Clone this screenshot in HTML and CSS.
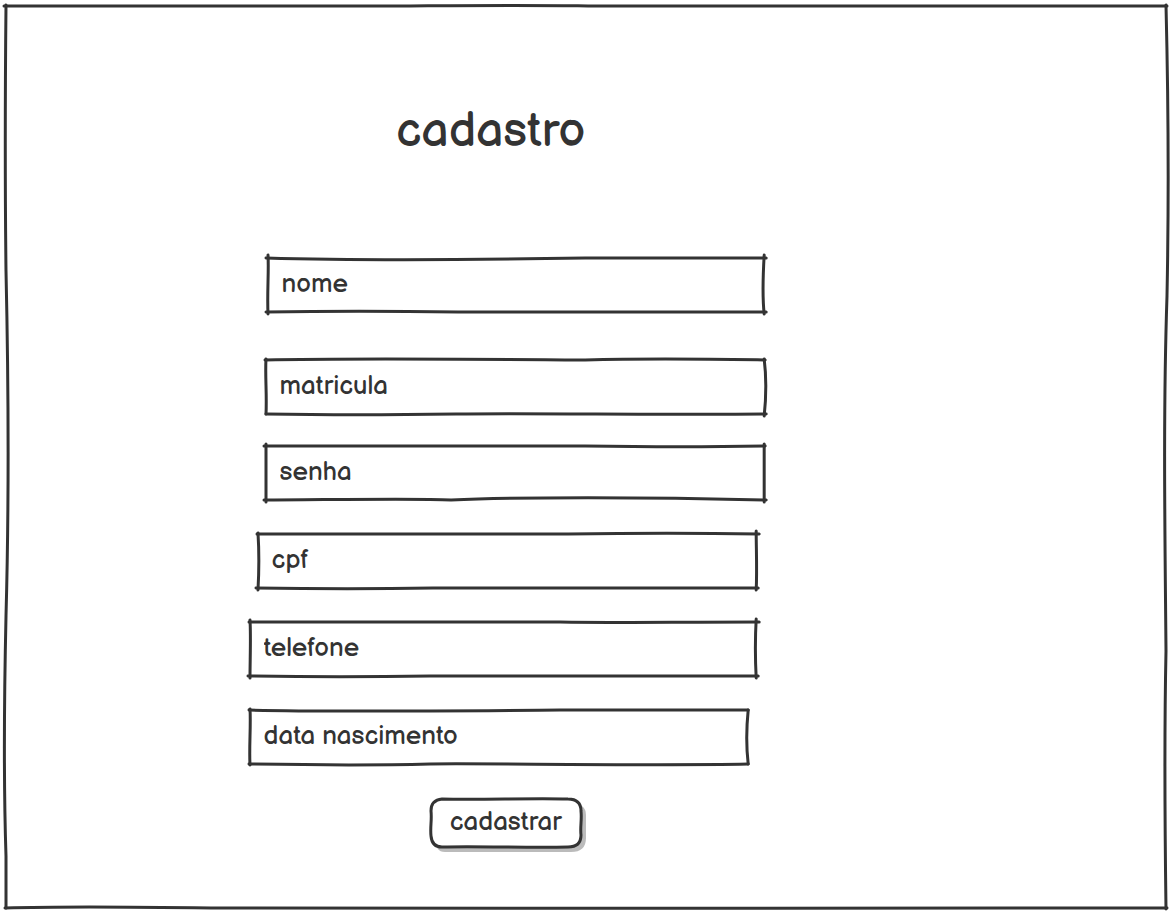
FILE: index.html
```html
<!DOCTYPE html>
<html lang="pt-BR">
<head>
<meta charset="utf-8">
<meta name="viewport" content="width=device-width, initial-scale=1">
<title>cadastro</title>
<link rel="stylesheet" href="styles.css">
</head>
<body>
<main class="frame">
  <svg class="sketch" viewBox="0 0 1160 902" preserveAspectRatio="none" aria-hidden="true">
    <path d="M-2 0C120 1 250 1 390 0S510 -1 590 0S900 0 1161 0"/>
    <path d="M0 -1C-1 100 -1 180 0 265C3 400 3 500 0 610C-2 700 -2 790 0 850L0 902"/>
    <path d="M1160 -1C1162 80 1163 190 1161 290C1157 410 1159 530 1160 645C1158 740 1159 830 1160 903"/>
    <path d="M-1 902C60 900 140 901 205 902S900 902 1161 902"/>
  </svg>
  <form class="form">
    <h1 class="title">cadastro</h1>
    <div class="fields">
      <div class="field field-inset">
        <svg class="sketch" viewBox="0 0 498 54" preserveAspectRatio="none" aria-hidden="true">
          <path d="M-2 0C100 3 200 2 317 0L498 0"/><path d="M0 -3C1 12 -1 35 0 56"/>
          <path d="M496 -3C495 14 494 38 496 56"/><path d="M-2 54C60 53 120 53 190 54L498 54"/>
        </svg>
        <input class="input" type="text" name="nome" placeholder="nome" aria-label="nome">
      </div>
      <div class="field field-right gap-large">
        <svg class="sketch" viewBox="0 0 500 54" preserveAspectRatio="none" aria-hidden="true">
          <path d="M-1 0C80 -2 200 -1 319 0C390 -2 440 -1 499 0"/><path d="M0 -1C-1 15 1 36 0 54"/>
          <path d="M498 -1C500 15 500 37 498 56"/><path d="M0 54C60 55 120 55 190 54S400 55 500 54"/>
        </svg>
        <input class="input" type="text" name="matricula" placeholder="matricula" aria-label="matricula">
      </div>
      <div class="field field-right gap-small">
        <svg class="sketch" viewBox="0 0 500 54" preserveAspectRatio="none" aria-hidden="true">
          <path d="M-2 0C50 1 120 0 319 0C390 1 440 1 499 0"/><path d="M0 -2L0 56"/>
          <path d="M498 -2L498 56"/><path d="M-2 54C50 54 150 52 185 54C250 51 380 51 500 54"/>
        </svg>
        <input class="input" type="password" name="senha" placeholder="senha" aria-label="senha">
      </div>
      <div class="field field-middle">
        <svg class="sketch" viewBox="0 0 500 54" preserveAspectRatio="none" aria-hidden="true">
          <path d="M-1 0L310 0C380 -1 440 -1 501 0"/><path d="M0 -1C1 15 1 38 0 56"/>
          <path d="M498 -3C498 15 499 37 498 56"/><path d="M-2 54C60 55 120 55 175 54L500 54"/>
        </svg>
        <input class="input" type="text" name="cpf" placeholder="cpf" aria-label="cpf">
      </div>
      <div class="field field-wide">
        <svg class="sketch" viewBox="0 0 508 54" preserveAspectRatio="none" aria-hidden="true">
          <path d="M-1 0L310 0C360 1 420 0 509 0"/><path d="M0 -2C1 15 0 38 0 56"/>
          <path d="M506 -3C505 15 505 37 506 56"/><path d="M-2 54C60 55 120 55 180 54L508 54"/>
        </svg>
        <input class="input" type="tel" name="telefone" placeholder="telefone" aria-label="telefone">
      </div>
      <div class="field field-left">
        <svg class="sketch" viewBox="0 0 500 54" preserveAspectRatio="none" aria-hidden="true">
          <path d="M-1 0C70 2 180 1 310 0L498 0"/><path d="M0 -1C1 15 -1 38 0 55"/>
          <path d="M498 0C496 20 496 37 498 54"/><path d="M-1 54C60 55 140 55 180 54S400 56 498 54"/>
        </svg>
        <input class="input" type="text" name="nascimento" placeholder="data nascimento" aria-label="data nascimento">
      </div>
    </div>
    <button class="button" type="button">
      <svg class="sketch" viewBox="0 0 152 50" preserveAspectRatio="none" aria-hidden="true">
        <path class="shadow" d="M16 5H140Q156 5 156 17V40Q156 54 141 54H15Q5 54 5 40V17Q5 5 16 5Z"/>
        <path class="face" d="M12 1C50 2 100 0 138 1Q151 1 151 13C152 22 150 29 151 37Q151 49 138 49C98 50 50 48 12 49Q2 49 1 38C0 29 2 22 1 13Q1 2 12 1Z"/>
      </svg>
      <span class="button-text">cadastrar</span>
    </button>
  </form>
</main>
</body>
</html>
```
FILE: styles.css
```css
* {
  box-sizing: border-box;
}

body {
  margin: 0;
  padding: 6px;
  background: #fff;
  color: #333;
  font-family: "Balsamiq Sans", Lato, "Open Sans", sans-serif;
}

.frame {
  position: relative;
  min-height: calc(100vh - 12px);
  padding-top: 98px;
}

.sketch {
  position: absolute;
  inset: 0;
  width: 100%;
  height: 100%;
  overflow: visible;
  fill: none;
  stroke: #333;
  stroke-width: 3;
  stroke-linecap: round;
  stroke-linejoin: round;
  pointer-events: none;
}

.sketch path {
  vector-effect: non-scaling-stroke;
}

.form {
  position: relative;
  display: flex;
  flex-direction: column;
  width: 44.5%;
  margin-left: 21%;
}

.title {
  margin: 0;
  padding-right: 34px;
  font-size: 48px;
  font-weight: 400;
  line-height: 56px;
  text-align: center;
}

.fields {
  display: flex;
  flex-direction: column;
  padding-top: 98px;
}

.field {
  position: relative;
  height: 54px;
  margin-top: 34px;
}

.field-inset {
  margin-top: 0;
  margin-left: 18px;
}

.field-right {
  margin-left: 16px;
}

.field-middle {
  margin-left: 8px;
  margin-right: 8px;
}

.field-wide {
  margin-right: 8px;
}

.field-left {
  margin-right: 16px;
}

.gap-large {
  margin-top: 48px;
}

.gap-small {
  margin-top: 32px;
}

.input {
  position: relative;
  width: 100%;
  height: 100%;
  padding: 0 14px 2px;
  border: 0;
  outline: 0;
  background: transparent;
  color: #333;
  font: 400 26px/32px "Balsamiq Sans", Lato, "Open Sans", sans-serif;
}

.input::placeholder {
  color: #333;
  opacity: 1;
}

.button {
  position: relative;
  align-self: center;
  margin-top: 34px;
  margin-right: 4px;
  height: 50px;
  padding: 0 20px;
  border: 0;
  background: transparent;
  color: #333;
  font: 400 26px/32px "Balsamiq Sans", Lato, "Open Sans", sans-serif;
  cursor: pointer;
}

.button-text {
  position: relative;
}

.sketch .shadow {
  fill: #bbb;
  stroke: none;
}

.sketch .face {
  fill: #fff;
}
```
